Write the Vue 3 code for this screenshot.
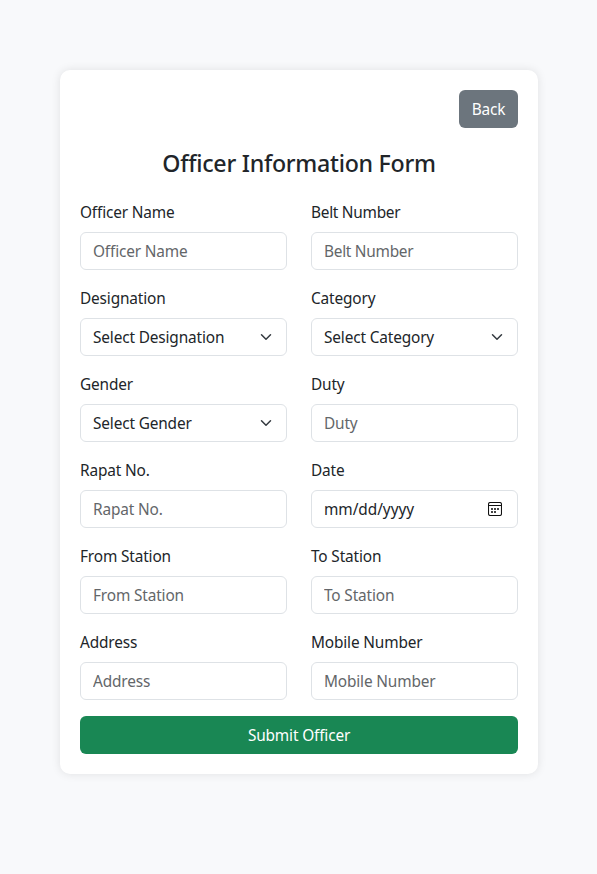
<script setup>
const fields = [
  { label: 'Officer Name', text: 'Officer Name', type: 'input' },
  { label: 'Belt Number', text: 'Belt Number', type: 'input', tight: true },
  { label: 'Designation', text: 'Select Designation', type: 'select' },
  { label: 'Category', text: 'Select Category', type: 'select' },
  { label: 'Gender', text: 'Select Gender', type: 'select' },
  { label: 'Duty', text: 'Duty', type: 'input' },
  { label: 'Rapat No.', text: 'Rapat No.', type: 'input' },
  { label: 'Date', text: 'mm/dd/yyyy', type: 'date' },
  { label: 'From Station', text: 'From Station', type: 'input' },
  { label: 'To Station', text: 'To Station', type: 'input' },
  { label: 'Address', text: 'Address', type: 'input' },
  { label: 'Mobile Number', text: 'Mobile Number', type: 'input' },
]
</script>

<template>
  <main class="page">
    <form class="card" @submit.prevent>
      <div class="top">
        <button type="button" class="btn back">Back</button>
      </div>
      <h2 class="title">Officer Information Form</h2>
      <div class="grid">
        <div v-for="f in fields" :key="f.label" class="field" :class="{ tight: f.tight }">
          <label class="label">{{ f.label }}</label>
          <input v-if="f.type === 'input'" class="control" type="text" :placeholder="f.text" />
          <div v-else class="control picker" :class="f.type" tabindex="0">
            <span class="value">{{ f.text }}</span>
            <svg v-if="f.type === 'select'" class="chevron" viewBox="0 0 16 16" width="16" height="12">
              <path fill="none" stroke="#343a40" stroke-linecap="round" stroke-linejoin="round" stroke-width="2" d="m2 5 6 6 6-6" />
            </svg>
            <svg v-else class="calendar" viewBox="0 0 14 14" width="14" height="14">
              <rect x=".5" y=".5" width="13" height="13" rx="1.8" fill="none" stroke="#111" stroke-width="1.1" />
              <path d="M.5 3.5h13" stroke="#111" />
              <path d="M3 6h2v2H3zM6 6h2v2H6zM9 6h2v2H9zM3 9h2v2H3zM6 9h2v2H6z" fill="#444" />
            </svg>
          </div>
        </div>
      </div>
      <button type="submit" class="btn submit">Submit Officer</button>
    </form>
  </main>
</template>

<style>
body {
  margin: 0;
  background: #f8f9fa;
}
</style>

<style scoped>
.page {
  box-sizing: border-box;
  min-height: 874px;
  padding: 70px 59px 100px 60px;
  background: #f8f9fb;
  color: #212529;
  font: 400 15.4px/24px "Segoe UI", "Noto Sans", "Open Sans", sans-serif;
  letter-spacing: -0.15px;
}
.card {
  box-sizing: border-box;
  height: 704px;
  padding: 20px;
  border-radius: 10px;
  background: #fff;
  box-shadow: 0 0 10px rgba(0, 0, 0, 0.1);
}
.top {
  display: flex;
  justify-content: flex-end;
}
.btn {
  box-sizing: border-box;
  display: block;
  height: 38px;
  padding: 2px 0 0;
  border: 0;
  border-radius: 6px;
  color: #fff;
  font: inherit;
  letter-spacing: inherit;
  text-align: center;
}
.back {
  width: 59px;
  background: #6c757d;
}
.title {
  margin: 21px 0 22px;
  font-size: 23.2px;
  font-weight: 500;
  line-height: 29px;
  letter-spacing: -0.27px;
  text-align: center;
}
.grid {
  display: grid;
  grid-template-columns: 207px 207px;
  gap: 16px 24px;
}
.tight {
  letter-spacing: -0.27px;
}
.label {
  display: block;
  height: 24px;
  margin-bottom: 8px;
  line-height: 26px;
}
.control {
  box-sizing: border-box;
  display: block;
  width: 100%;
  height: 38px;
  padding: 0 12px;
  border: 1px solid #dee2e6;
  border-radius: 6px;
  background: #fff;
  color: #212529;
  font: inherit;
  letter-spacing: inherit;
}
.control::placeholder {
  color: #636669;
  opacity: 1;
}
.picker {
  display: flex;
  align-items: center;
  justify-content: space-between;
}
.date {
  letter-spacing: -0.05px;
}
.value {
  padding-top: 2px;
}
.chevron {
  margin: 0 -1px 1px 0;
  padding-right: 1px;
}
.calendar {
  margin: 0 3px 0 0;
}
.submit {
  width: 100%;
  margin-top: 16px;
  background: #198754;
}
</style>
